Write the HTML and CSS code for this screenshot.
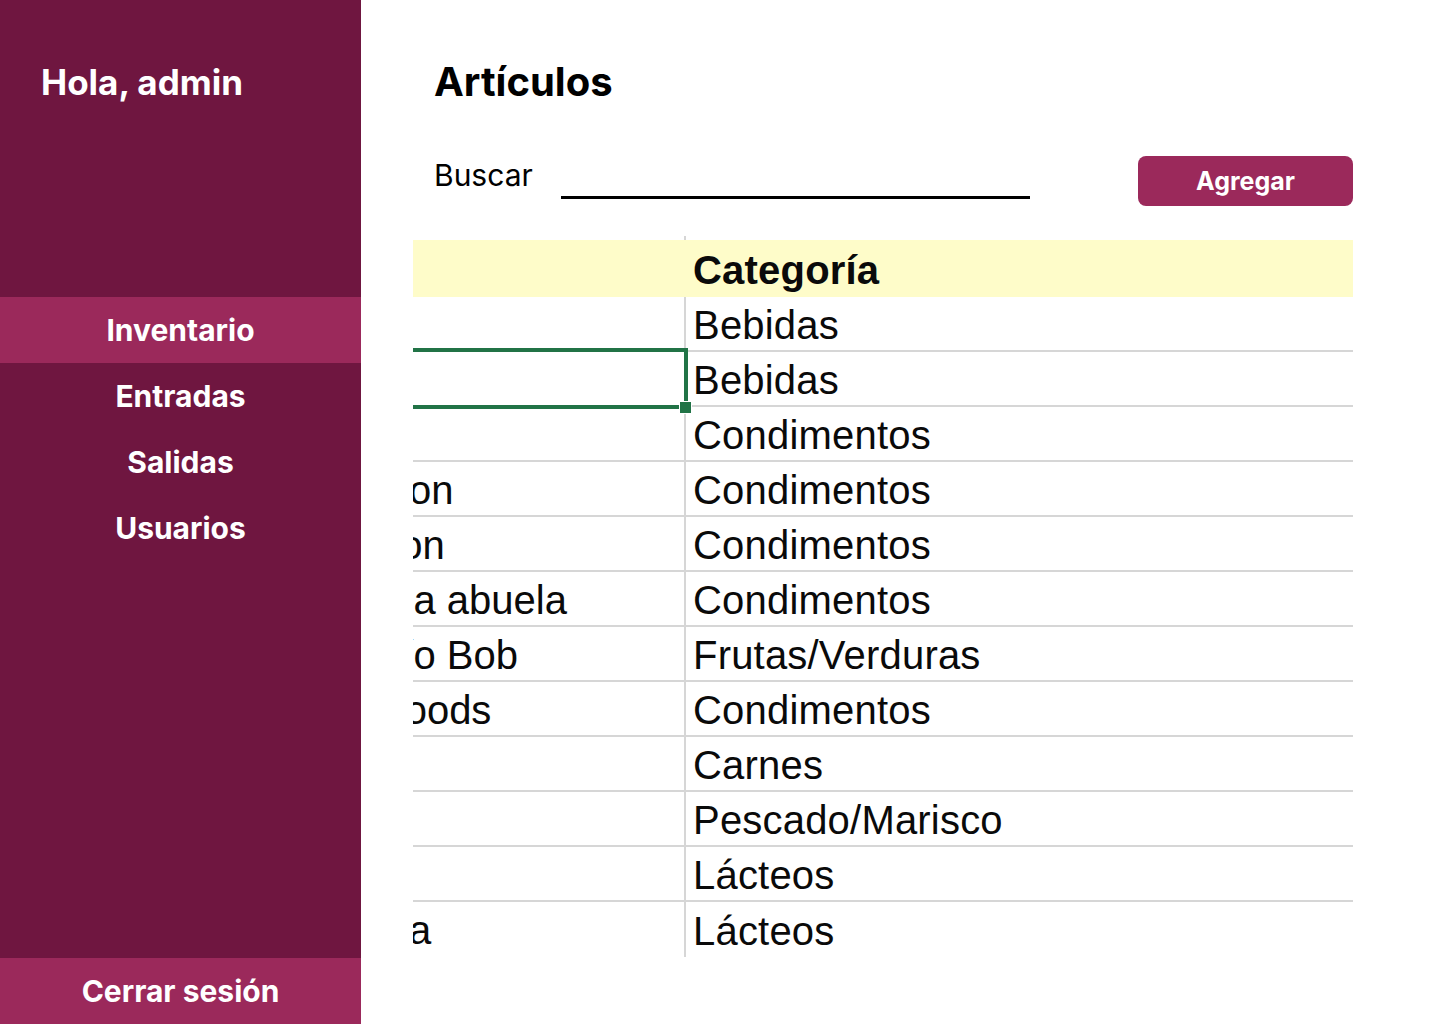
FILE: index.html
```html
<!DOCTYPE html>
<html lang="es">
<head>
<meta charset="utf-8">
<title>Artículos</title>
<link rel="stylesheet" href="styles.css">
</head>
<body>
<div class="app">
  <aside class="sidebar">
    <div class="greeting">Hola, admin</div>
    <nav class="nav">
      <a class="nav-item active" href="#">Inventario</a>
      <a class="nav-item" href="#">Entradas</a>
      <a class="nav-item" href="#">Salidas</a>
      <a class="nav-item" href="#">Usuarios</a>
    </nav>
    <a class="logout" href="#">Cerrar sesión</a>
  </aside>
  <main class="main">
    <h1 class="title">Artículos</h1>
    <div class="search-row">
      <label class="search-label" for="q">Buscar</label>
      <input class="search-input" id="q" type="text">
      <button class="btn-add" type="button">Agregar</button>
    </div>
    <div class="sheet">
      <div class="tick"></div>
      <div class="row head">
        <div class="cell name"></div>
        <div class="cell cat">Categoría</div>
      </div>
      <div class="row"><div class="cell name">Té Dharamsala</div><div class="cell cat">Bebidas</div></div>
      <div class="row"><div class="cell name">Cerveza tibetana Barley</div><div class="cell cat">Bebidas</div></div>
      <div class="row"><div class="cell name">Sirope de regaliz</div><div class="cell cat">Condimentos</div></div>
      <div class="row"><div class="cell name">Especias Cajun del chef Anton</div><div class="cell cat">Condimentos</div></div>
      <div class="row"><div class="cell name">Mezcla Gumbo del chef Anton</div><div class="cell cat">Condimentos</div></div>
      <div class="row"><div class="cell name">Mermelada de grosellas de la abuela</div><div class="cell cat">Condimentos</div></div>
      <div class="row"><div class="cell name">Peras secas orgánicas del tío Bob</div><div class="cell cat">Frutas/Verduras</div></div>
      <div class="row"><div class="cell name">Salsa de arándanos Northwoods</div><div class="cell cat">Condimentos</div></div>
      <div class="row"><div class="cell name">Buey Mishi Kobe</div><div class="cell cat">Carnes</div></div>
      <div class="row"><div class="cell name">Pez espada</div><div class="cell cat">Pescado/Marisco</div></div>
      <div class="row"><div class="cell name">Queso Cabrales</div><div class="cell cat">Lácteos</div></div>
      <div class="row last"><div class="cell name">Queso Manchego La Pastora</div><div class="cell cat">Lácteos</div></div>
      <div class="selection"><span class="handle"></span></div>
    </div>
  </main>
</div>
</body>
</html>
```

FILE: styles.css
```css
* { box-sizing: border-box; }

html, body {
  margin: 0;
  padding: 0;
  background: #ffffff;
}

body {
  font-family: Inter, "Noto Sans", sans-serif;
  color: #000;
}

.app {
  display: flex;
  width: 1440px;
  height: 1024px;
}

/* Sidebar */
.sidebar {
  width: 361px;
  flex: 0 0 361px;
  background: #6f1640;
  display: flex;
  flex-direction: column;
  color: #fff;
}

.greeting {
  height: 297px;
  padding: 60px 0 0 41px;
  font-size: 35px;
  line-height: 44px;
  font-weight: 700;
}

.nav {
  display: flex;
  flex-direction: column;
}

.nav-item,
.logout {
  height: 66px;
  display: flex;
  align-items: center;
  justify-content: center;
  color: #fff;
  text-decoration: none;
  font-size: 30px;
  line-height: 36px;
  font-weight: 700;
}

.nav-item.active,
.logout {
  background: #9b295b;
}

.logout {
  margin-top: auto;
}

/* Main */
.main {
  flex: 1;
  padding: 58px 87px 0 73px;
  display: flex;
  flex-direction: column;
}

.title {
  margin: 0;
  font-size: 40px;
  line-height: 48px;
  font-weight: 700;
}

.search-row {
  margin-top: 50px;
  height: 50px;
  display: flex;
}

.search-label {
  font-size: 30px;
  line-height: 38px;
  align-self: flex-start;
}

.search-input {
  margin-left: 28px;
  width: 469px;
  height: 43px;
  border: 0;
  border-bottom: 3px solid #000;
  background: transparent;
  outline: none;
  font: inherit;
  font-size: 24px;
}

.btn-add {
  margin-left: auto;
  width: 215px;
  height: 50px;
  border: 0;
  border-radius: 8px;
  background: #9b295b;
  color: #fff;
  font-family: Inter, "Noto Sans", sans-serif;
  font-size: 25px;
  font-weight: 700;
  cursor: pointer;
}

/* Spreadsheet excerpt */
.sheet {
  position: relative;
  margin-top: 30px;
  margin-left: -21px;
  width: 940px;
  overflow: hidden;
  font-family: "Liberation Sans", Arial, sans-serif;
  font-size: 40px;
  color: #0a0a0a;
}

.tick {
  width: 273px;
  height: 4px;
  border-right: 2px solid #d6d6d6;
}

.row {
  display: grid;
  grid-template-columns: 273px 1fr;
  height: 55px;
  border-bottom: 2px solid #d6d6d6;
}

.row.last {
  border-bottom: 0;
}

.row.head {
  height: 57px;
  background: #fefcc9;
  border-bottom: 0;
  font-weight: 700;
}

.cell {
  display: flex;
  align-items: center;
  padding-top: 4px;
  white-space: nowrap;
  overflow: hidden;
}

.name {
  display: block;
  padding-top: 0;
  line-height: 57px;
  text-indent: -502px;
  border-right: 2px solid #d6d6d6;
}

.head .name {
  border-right-color: transparent;
}

.cat {
  padding-left: 7px;
  letter-spacing: 0.2px;
}

.selection {
  position: absolute;
  left: -10px;
  top: 112px;
  width: 285px;
  height: 61px;
  border: 4px solid #217346;
  border-left: 0;
}

.handle {
  position: absolute;
  right: -8px;
  bottom: -9px;
  width: 13px;
  height: 13px;
  background: #217346;
  border: 1px solid #fff;
}
```
